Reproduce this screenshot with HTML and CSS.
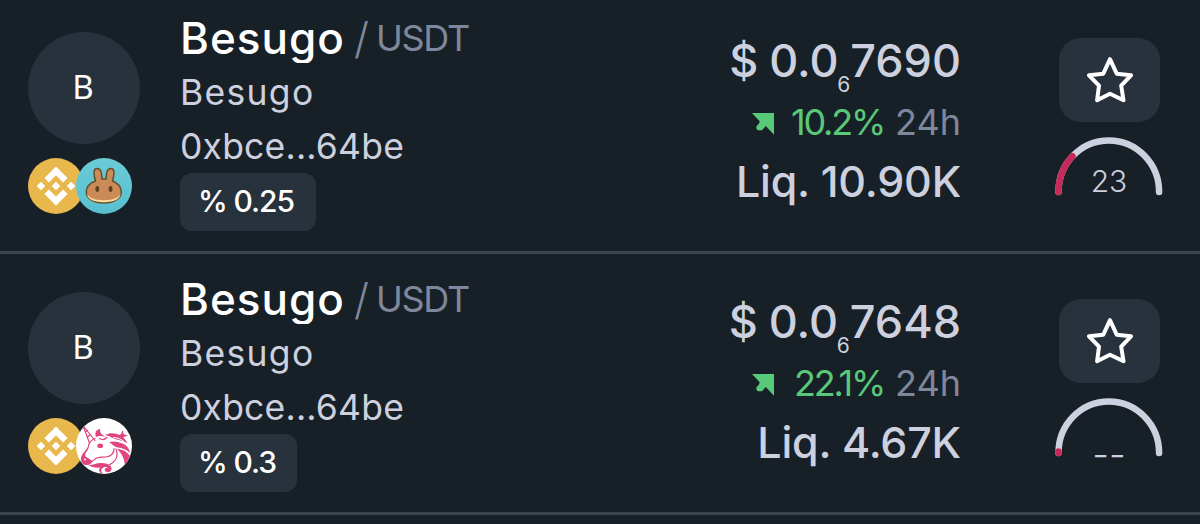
FILE: index.html
```html
<!DOCTYPE html>
<html lang="en">
<head>
<meta charset="utf-8">
<title>Besugo pairs</title>
<link rel="stylesheet" href="styles.css">
</head>
<body>
<svg class="defs" aria-hidden="true">
  <symbol id="bnb" viewBox="0 0 56 56">
    <circle cx="28" cy="28" r="28" fill="#e8b84d"/>
    <g fill="#fff">
      <path d="M28 8.500l11.500 11.500-4.400 4.400L28 17.300l-7.100 7.100-4.400-4.400z"/>
      <path d="M28 47.500l11.500-11.500-4.400-4.400L28 38.700l-7.100-7.100-4.400 4.400z"/>
      <path d="M28 23.700l4.300 4.300L28 32.300l-4.300-4.300zM13 23.700l4.300 4.300L13 32.300l-4.300-4.300zM43 23.700l4.300 4.300L43 32.300l-4.300-4.300z"/>
    </g>
  </symbol>
  <symbol id="cake" viewBox="0 0 56 56">
    <defs><linearGradient id="sea" x1="0" y1="0" x2="0" y2="1"><stop offset="0" stop-color="#69cbd5"/><stop offset="1" stop-color="#59bfd0"/></linearGradient></defs>
    <circle cx="28" cy="28" r="28" fill="url(#sea)"/>
    <path d="M19.500 23C18 18 16.500 10.500 21 10.500c4.500 0 4.700 5 5 10.500h4c.3-5.500.5-10.500 5-10.500s3 7.500 1.500 12.500c5 2 8.800 6 8.800 11 0 6.500-7.500 11-17.500 11s-17.500-4.500-17.500-11c0-5 3.500-9 9.200-11z" fill="#ca8b58" stroke="#65502b" stroke-width="1.500" stroke-linejoin="round"/>
    <path d="M11 35.500c1.500 4 7 6.700 16.800 6.700s15.300-2.700 16.800-6.700c-.3 5.500-6.600 8.700-16.800 8.700S11.300 41 11 35.500z" fill="#fbdc9a"/>
    <ellipse cx="21.300" cy="31" rx="1.900" ry="2.900" fill="#60401f"/>
    <ellipse cx="34.600" cy="31" rx="1.900" ry="2.900" fill="#60401f"/>
  </symbol>
  <symbol id="unicorn" viewBox="0 0 56 56">
    <clipPath id="disc"><circle cx="28" cy="28" r="28"/></clipPath>
    <circle cx="28" cy="28" r="28" fill="#fff"/>
    <g clip-path="url(#disc)">
      <g fill="#e1457f">
        <path d="M20 19C18.500 14.500 20 11.500 24.500 11c-1.500 3 1 5.500 5 8-3-1-6-1.500-9.500 0z"/>
        <path d="M29 17c5-2.500 11-2 15 .5 4 2 6 5 7.500 7.500-5-2.500-9-2.800-12.500-4-3.500-1.200-6-3.500-10-4z"/>
        <path d="M33 24c5-1.500 10 0 14 1.700 4 1.800 6.500 5 7 9.300-4-4-8-5-12-5.500-4-.6-6-3.500-9-5.500z"/>
        <path d="M41 31c6 .3 10 3 13 7l-5 10c-.5-7-3-12.500-8-17z"/>
        <path d="M13 25.500C11 32 7.500 34 5.500 38c-1.500 3.500 0 8 4 9 3.500.6 6.500-1.500 8-4.500-3 .5-4-2-6.500-3-2-.8-2.500-3-1-5 2-3 3.500-5 3-9z"/>
        <path d="M12 47c6 .5 8-2.500 14-2 6 .3 10.500 3 9.500 6.500-.8 3-5 3.500-6.500 1.200-1.200-2 1.200-3.600 2.600-2.300-1-2.200-5-1.700-6.100 1.100-1 2.500 1 4 3 5.500-5-1-6.500-4.500-4.500-7.500-4 .5-9-.5-12-2.500z"/>
        <ellipse cx="24.200" cy="27.700" rx="2.900" ry="2.300"/>
        <path d="M46.500 12l1.200 4.300 4.300 1.200-4.300 1.500-1.200 4.500-1.500-4.500-4-1.500 4-1.200z"/>
      </g>
      <g fill="none" stroke="#e1457f" stroke-width="1.200" stroke-linejoin="round" stroke-linecap="round">
        <path d="M13.500 25L7 7.500 19 22.500M9.500 14l2-1.500M11.500 19l3-2.500"/>
        <path d="M19 20.500q-5 2-6.500 7M31 19.500c-2.500 2.500-5.500 2.200-7.500 1M17.500 42.500c4-5 8-3 12.500-3.500 5-.5 8.500-4 8-8.500M40 31c3 8-1 13-7 16"/>
      </g>
      <circle cx="9" cy="41.500" r=".9" fill="#fff"/>
      <path d="M37 19.500c4 0 8 1.500 11 4" fill="none" stroke="#fff"/>
    </g>
  </symbol>
  <symbol id="arrow" viewBox="0 0 22 22">
    <path d="M0 0H22V21.700L13.800 13 10.700 16.400Q9.800 17.500 8.200 17.300Q4.500 17.800 4.300 14.500Q4.200 13 7 10.500L7.700 8.300Z" fill="#58c979"/>
  </symbol>
  <symbol id="star" viewBox="0 0 46 46">
    <path d="M23 2.200L29.700 16.700 44 18.300 34.200 28.700 36.500 43.200 23 36.800 10.100 43.200 12 28.700 2 18.300 16.300 16.700Z" fill="none" stroke="#fff" stroke-width="4" stroke-linejoin="round"/>
  </symbol>
</svg>

<main class="list">
  <section class="row">
    <div class="logos">
      <div class="avatar">B</div>
      <div class="chain"><svg><use href="#bnb"/></svg><svg><use href="#cake"/></svg></div>
    </div>
    <div class="info">
      <div class="pair"><span class="base">Besugo</span><span class="slash">/</span><span class="quote">USDT</span></div>
      <div class="name">Besugo</div>
      <div class="address">0xbce...64be</div>
      <div class="fee">% 0.25</div>
    </div>
    <div class="stats">
      <div class="price"><span class="dollar">$</span><span class="lead">0.0</span><span class="sub">6</span><span class="digits">7690</span></div>
      <div class="change"><svg class="arrow"><use href="#arrow"/></svg><span class="up">10.2%</span><span class="period">24h</span></div>
      <div class="liq">Liq. 10.90K</div>
    </div>
    <div class="actions">
      <button class="fav" aria-label="Favourite"><svg><use href="#star"/></svg></button>
      <div class="gauge">
        <svg viewBox="0 0 108 60"><path class="track" d="M3.500 55A50.300 51.500 0 0 1 104.100 55"/><path class="value" d="M3.500 55A50.300 51.500 0 0 1 17.500 19.300"/></svg>
        <span class="score">23</span>
      </div>
    </div>
  </section>
  <section class="row second">
    <div class="logos">
      <div class="avatar">B</div>
      <div class="chain"><svg><use href="#bnb"/></svg><svg><use href="#unicorn"/></svg></div>
    </div>
    <div class="info">
      <div class="pair"><span class="base">Besugo</span><span class="slash">/</span><span class="quote">USDT</span></div>
      <div class="name">Besugo</div>
      <div class="address">0xbce...64be</div>
      <div class="fee short">% 0.3</div>
    </div>
    <div class="stats">
      <div class="price"><span class="dollar">$</span><span class="lead">0.0</span><span class="sub">6</span><span class="digits">7648</span></div>
      <div class="change"><svg class="arrow"><use href="#arrow"/></svg><span class="up">22.1%</span><span class="period">24h</span></div>
      <div class="liq">Liq. 4.67K</div>
    </div>
    <div class="actions">
      <button class="fav" aria-label="Favourite"><svg><use href="#star"/></svg></button>
      <div class="gauge">
        <svg viewBox="0 0 108 60"><path class="track" d="M3.500 55A50.300 51.500 0 0 1 104.100 55"/><path class="value" d="M3.500 55V53.500"/></svg>
        <span class="score none">--</span>
      </div>
    </div>
  </section>
</main>
</body>
</html>
```
FILE: styles.css
```css
* { box-sizing: border-box; }
body {
  margin: 0;
  height: 524px;
  overflow: hidden;
  background: #182027;
  color: #cdd0de;
  font-family: Inter, "Open Sans", sans-serif;
  white-space: nowrap;
}
.defs { position: absolute; width: 0; height: 0; }
.list { margin-top: -7px; }
.row {
  display: grid;
  grid-template-columns: 152px 400px 1fr 104px;
  height: 261px;
  padding: 0 41px 0 28px;
  border-bottom: 3px solid #3b4550;
}
.logos { padding-top: 39px; }
.second .logos { padding-top: 38px; }
.avatar {
  display: grid;
  place-items: center;
  width: 112px;
  height: 112px;
  padding: 0 2px 3px 0;
  border-radius: 50%;
  background: #28323c;
  color: #fff;
  font: 33px/1 "Noto Sans", sans-serif;
}
.chain { display: flex; margin-top: 14px; }
.chain svg { width: 56px; height: 56px; }
.chain svg + svg { margin-left: -8px; }
.info { padding-top: 18px; }
.pair { display: flex; height: 56px; line-height: 54px; }
/* The token name is clipped just under the baseline, through the descender. */
.base {
  width: 174px;
  height: 52px;
  overflow: hidden;
  color: #fff;
  font-size: 44px;
  font-weight: 550;
  letter-spacing: 1px;
}
.slash { width: 22px; color: #7f879c; font-size: 43px; font-weight: 300; }
.quote { color: #7f879c; font-size: 36px; letter-spacing: -1.3px; }
.name { height: 52px; line-height: 52px; font-size: 35.5px; letter-spacing: 1.3px; }
.address { height: 54px; line-height: 55px; font-size: 35.5px; letter-spacing: .2px; }
.fee {
  width: 136px;
  height: 58px;
  padding-left: 18px;
  border-radius: 12px;
  background: #28323c;
  color: #fff;
  font-size: 30px;
  font-weight: 500;
  letter-spacing: -1.1px;
  line-height: 57px;
}
.fee.short { width: 117px; }
.stats { display: flex; flex-direction: column; align-items: flex-end; padding: 37px 94px 0 0; }
.price { display: flex; height: 62px; font-size: 45px; font-weight: 500; line-height: 62px; }
.dollar { width: 40px; }
.lead { width: 68px; }
.sub { width: 13px; padding-top: 24px; font-size: 21px; font-weight: 400; }
.change { display: flex; align-items: center; height: 60px; font-size: 36px; }
.arrow { width: 22px; height: 22px; margin-top: 4px; }
.up { width: 110px; margin-right: 11px; color: #58c979; letter-spacing: -2.2px; text-align: right; }
.period { color: #7f879c; }
.liq { height: 60px; font-size: 43px; font-weight: 500; letter-spacing: -.2px; line-height: 59px; }
.actions { padding-top: 45px; }
.fav {
  display: grid;
  place-items: center;
  width: 101px;
  height: 84px;
  margin: 0 0 0 4px;
  padding: 0 0 0 1px;
  border: 0;
  border-radius: 22px;
  background: #28323c;
}
.fav svg { width: 46px; height: 46px; }
.gauge { display: grid; width: 108px; height: 60px; margin-top: 15px; }
.gauge svg { grid-area: 1 / 1; width: 108px; height: 60px; }
.gauge path { fill: none; stroke-width: 6.5px; stroke-linecap: round; }
.track { stroke: #cdd0de; }
.gauge .value { stroke: #c62a5b; }
.score { grid-area: 1 / 1; justify-self: center; padding-top: 26px; font-size: 30px; font-weight: 350; line-height: 36px; }
.score.none { padding-top: 39px; font-size: 37px; font-weight: 300; }
```
